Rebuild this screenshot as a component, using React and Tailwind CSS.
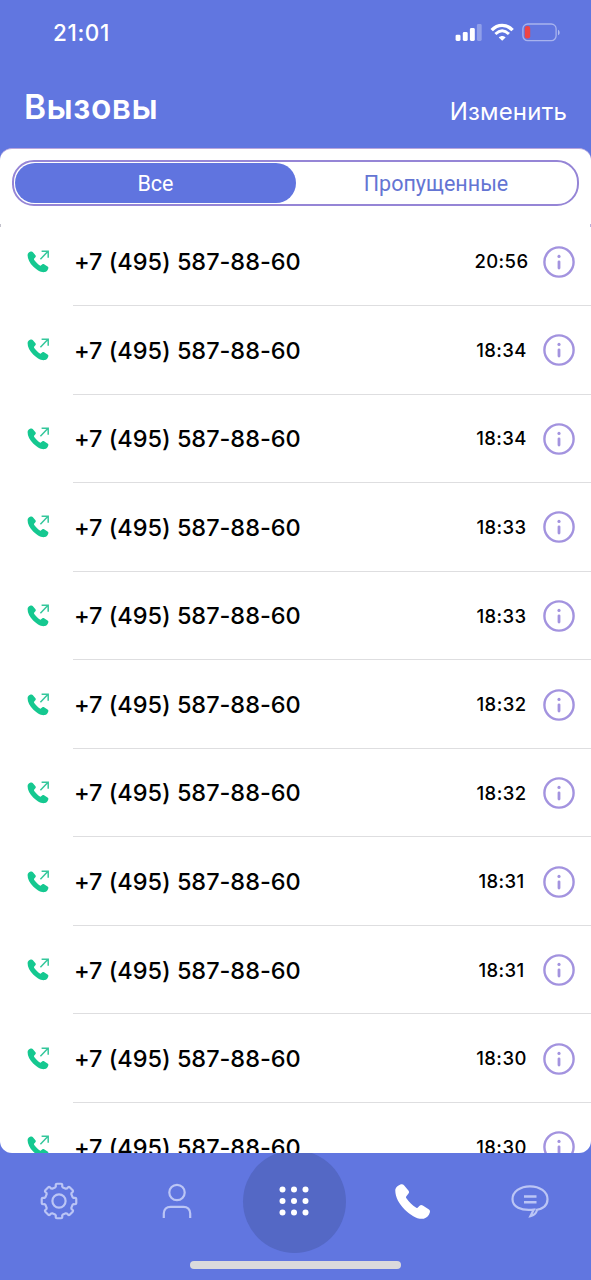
import React from 'react';

const PHONE = '+7 (495) 587-88-60';
const TIMES = ['20:56', '18:34', '18:34', '18:33', '18:33', '18:32', '18:32', '18:31', '18:31', '18:30', '18:30'];

const calls = TIMES.map((time, index) => ({ id: index, phone: PHONE, time }));

const HANDSET =
  'M.3 6.2C.3 3.5 3 1.3 5.4.4 7 -.1 8.3.3 9.2 1.4L13.4 6.6C14.3 7.8 14.2 8.7 13.3 9.8L11.4 12.2C10.8 13 10.9 13.6 11.4 14.3 14 18 17.5 21.3 20.9 23.6 21.6 24.1 22.2 24 22.8 23.4L24.6 21.8C25.6 20.9 26.6 20.9 27.8 21.6L33.6 25.2C34.9 26 35.2 27.1 34.8 28.5 34 31.5 31.7 34 28.8 34.7 22.5 35.8 15 30.7 9.6 25.4 4 19.8 .1 12.5.3 6.2Z';

const StatusIcons = () => (
  <svg width="106" height="20" viewBox="0 0 106 20" fill="none">
    <rect x="0.6" y="11.7" width="4.9" height="6.3" rx="1.4" fill="white" />
    <rect x="7.8" y="9" width="4.9" height="9" rx="1.4" fill="white" />
    <rect x="14.9" y="5" width="4.9" height="13" rx="1.4" fill="white" />
    <rect x="21.9" y="1" width="4.8" height="17" rx="1.4" fill="white" fillOpacity="0.3" />
    <path d="M36.7 7.2C42.7 .8 51.6 .8 57.6 7.2" stroke="white" strokeWidth="3.4" />
    <path d="M40.4 11C44.7 6.9 49.6 6.9 53.9 11" stroke="white" strokeWidth="2.9" />
    <path d="M43.8 14.4C45.8 12.4 48.6 12.4 50.6 14.4L47.2 17.8Z" fill="white" />
    <rect x="67.9" y="1" width="33.2" height="16.6" rx="4.8" stroke="white" strokeOpacity="0.45" strokeWidth="1.3" />
    <rect x="69.8" y="3" width="5.4" height="12.6" rx="2.4" fill="#ef4444" />
    <path d="M103 6.7C105.2 7.8 105.2 11.2 103 12.3Z" fill="white" fillOpacity="0.5" />
  </svg>
);

const OutgoingIcon = () => (
  <svg width="24" height="24" viewBox="0 0 24 24" fill="none">
    <path d={HANDSET} fill="#15c890" transform="translate(1.4 1.3) scale(.6)" />
    <path d="M14.4 9.3L22 1.2M15.6 1.2H22.2V7.8" stroke="#35c79c" strokeWidth="1.5" />
  </svg>
);

const InfoIcon = () => (
  <svg width="32" height="32" viewBox="0 0 32 32" fill="none" stroke="#a393df">
    <circle cx="16" cy="16" r="14.6" strokeWidth="2.4" />
    <circle cx="16" cy="10.4" r="1.6" fill="#a393df" stroke="none" />
    <path d="M16 15.8V22" strokeWidth="2.8" strokeLinecap="round" />
  </svg>
);

// eight rounded teeth around the ring
const gearPoint = (radius, degrees) => {
  const angle = (degrees * Math.PI) / 180;
  return `${(19 + radius * Math.sin(angle)).toFixed(2)} ${(19 - radius * Math.cos(angle)).toFixed(2)}`;
};

const gearPath = [0, 45, 90, 135, 180, 225, 270, 315]
  .map((a, i) => (
    `${i === 0 ? 'M' : 'L'}${gearPoint(14.1, a - 16)} L${gearPoint(14.8, a - 12.5)} L${gearPoint(16.4, a - 11.5)}` +
    `Q${gearPoint(17.5, a - 10.5)} ${gearPoint(17.4, a - 7)} L${gearPoint(17.4, a + 7)}` +
    `Q${gearPoint(17.5, a + 10.5)} ${gearPoint(16.4, a + 11.5)} L${gearPoint(14.8, a + 12.5)} L${gearPoint(14.1, a + 16)}`
  ))
  .join(' ') + 'Z';

const GearIcon = () => (
  <svg width="38" height="38" viewBox="0 0 38 38" fill="none" stroke="#bbc5f5" strokeWidth="2.2" strokeLinejoin="round">
    <path d={gearPath} />
    <circle cx="19" cy="19" r="6.6" />
  </svg>
);

const PersonIcon = () => (
  <svg width="30" height="36" viewBox="0 0 30 36" fill="none" stroke="#bbc5f5" strokeWidth="2.2">
    <circle cx="15" cy="9.5" r="7.7" />
    <path d="M1.8 35V30.5C1.8 26.5 4.6 23.8 8.5 23.8H21.5C25.4 23.8 28.2 26.5 28.2 30.5V35" />
  </svg>
);

const KeypadIcon = () => (
  <svg width="30" height="30" viewBox="0 0 30 30" fill="white">
    {[3.5, 15, 26.5].map((y) => [3.5, 15, 26.5].map((x) => <circle key={`${x}-${y}`} cx={x} cy={y} r="3" />))}
  </svg>
);

const HandsetIcon = () => (
  <svg width="35" height="35" viewBox="0 0 35 35" fill="white">
    <path d={HANDSET} />
  </svg>
);

const ChatIcon = () => (
  <svg width="38" height="34" viewBox="0 0 38 34" fill="none" stroke="#bbc5f5" strokeWidth="2.2">
    <path d="M24.6 26C31.5 24.9 36.5 21.2 36.5 15.2 36.5 7.6 28.8 2.3 19 2.3S1.5 7.6 1.5 15.2C1.5 22.3 9.5 27.3 22.8 25.6L19.4 32.2C23 31.4 25.2 29 26.2 25.7" />
    <path d="M13 12.5H25.5M13 18.3H25.5" strokeWidth="2.4" />
  </svg>
);

const CallRow = ({ call }) => (
  <li className="flex h-[88.55px] shrink-0 items-stretch pl-[26px]">
    <div className="flex w-[47px] items-center">
      <OutgoingIcon />
    </div>
    <div className="flex flex-1 items-center border-b border-[#dedee0] pt-px pr-[16px] pl-px">
      <span className="flex-1 whitespace-nowrap text-[23.5px] font-medium tracking-[-0.03px]">{call.phone}</span>
      <span className="w-[60px] pt-px pl-px text-center text-[18.5px] font-medium tracking-[0.4px]">{call.time}</span>
      <div className="ml-[12px]">
        <InfoIcon />
      </div>
    </div>
  </li>
);

const App = () => {
  return (
    <div className="flex h-[1280px] w-[591px] flex-col overflow-hidden bg-[#6176e0] font-['Inter',sans-serif] text-black">
      <header className="flex h-[148px] shrink-0 flex-col text-white">
        <div className="flex h-[65px] items-center justify-between pr-[30px] pl-[53px]">
          <span className="text-[22.5px] leading-[30px] font-medium tracking-[0.6px]">21:01</span>
          <StatusIcons />
        </div>
        <div className="flex items-baseline justify-between pt-[20px] pr-[24px] pl-[24px]">
          <h1 className="text-[33.5px] leading-[44px] font-semibold tracking-[0.5px]">Вызовы</h1>
          <button className="translate-y-px text-[24px] leading-[32px] tracking-[0.2px]">Изменить</button>
        </div>
      </header>

      <main className="flex h-[1005px] shrink-0 flex-col overflow-hidden rounded-[12px] border-t border-[#b9a6dc] bg-white">
        <div className="h-[68.5px] shrink-0 px-[12px] pt-[11px]">
          <div className="flex h-[46px] rounded-[22px] border-2 border-[#9585d6] p-px font-['Roboto',sans-serif] text-[21.5px]">
            <button className="w-[281px] rounded-[20px] bg-[#6074df] pt-[2px] text-white">Все</button>
            <button className="flex-1 pt-[2px] text-[#6475d3]">Пропущенные</button>
          </div>
          <div className="-mx-[12px] mt-[18px] flex h-[3px] justify-between">
            <span className="w-px bg-[#c3c2cc]" />
            <span className="w-px bg-[#b9b3dc]" />
          </div>
        </div>
        <ul className="flex flex-col">
          {calls.map((call) => (
            <CallRow key={call.id} call={call} />
          ))}
        </ul>
      </main>

      <nav className="grid h-[100px] shrink-0 grid-cols-5 grid-rows-[96px] place-items-center overflow-hidden pr-[2px]">
        <GearIcon />
        <PersonIcon />
        <div className="flex size-[103px] items-center justify-center rounded-full bg-[#5468c5]">
          <KeypadIcon />
        </div>
        <HandsetIcon />
        <ChatIcon />
      </nav>
      <div className="mx-auto mt-[8px] h-[7.5px] w-[211px] shrink-0 rounded-full bg-[#dbdadc]" />
    </div>
  );
};

export default App;
